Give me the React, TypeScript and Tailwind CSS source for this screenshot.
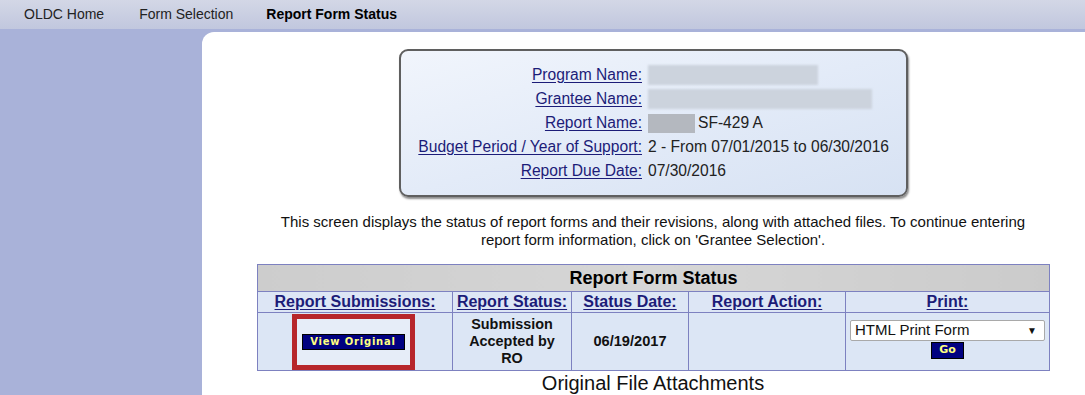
import React from "react";

const arial = { fontFamily: '"Liberation Sans", Arial, sans-serif' };

function Label({ children }: { children: React.ReactNode }) {
  return (
    <div className="text-right text-[15.6px] leading-[24px] text-[#1c1c78] underline underline-offset-2 whitespace-nowrap">
      {children}
    </div>
  );
}

export default function App() {
  return (
    <div
      className="w-[1085px] h-[395px] overflow-hidden bg-[#a9b2d9] text-[#111]"
      style={arial}
    >
      {/* Nav bar */}
      <div className="h-[29px] flex items-center text-[14px] bg-gradient-to-b from-[#d3d7e6] to-[#c1c7de] text-[#222]">
        <span className="ml-[24px]">OLDC Home</span>
        <span className="ml-[35px]">Form Selection</span>
        <span className="ml-[33px] font-bold text-black">Report Form Status</span>
      </div>

      <div className="flex">
        <div className="w-[202px] shrink-0" />
        <div className="flex-1 h-[366px] mt-[3px] bg-white rounded-tl-[12px]">
          <div className="ml-[55px] w-[792px] flex flex-col">
            {/* Info box */}
            <div className="mt-[17px] ml-[142px] w-[509px] h-[148px] rounded-[9px] border-2 border-[#5f5f5f] shadow-[1px_2px_2px_rgba(0,0,0,0.45)] bg-gradient-to-br from-[#f1f5fc] via-[#e3ebf8] to-[#d7e2f3] pt-[12px]">
              <div className="grid grid-cols-[241px_1fr] gap-x-[6px]">
                <Label>Program Name:</Label>
                <div className="flex items-center h-[24px]">
                  <div className="w-[170px] h-[20px] bg-[#ccd3dd] blur-[1px]" />
                </div>
                <Label>Grantee Name:</Label>
                <div className="flex items-center h-[24px]">
                  <div className="w-[224px] h-[20px] bg-[#ccd3dd] blur-[1px]" />
                </div>
                <Label>Report Name:</Label>
                <div className="flex items-center h-[24px] text-[15.6px] text-[#222]">
                  <div className="w-[47px] h-[19px] bg-[#b4b8bf] blur-[0.5px]" />
                  <span className="ml-[3px]">SF-429 A</span>
                </div>
                <Label>Budget Period / Year of Support:</Label>
                <div className="text-[15.6px] leading-[24px] text-[#222] whitespace-nowrap">
                  2 - From 07/01/2015 to 06/30/2016
                </div>
                <Label>Report Due Date:</Label>
                <div className="text-[15.6px] leading-[24px] text-[#222]">07/30/2016</div>
              </div>
            </div>

            {/* Description */}
            <p className="mt-[16px] mx-auto w-[780px] text-center text-[15px] leading-[18px] text-[#111]">
              This screen displays the status of report forms and their revisions, along with attached files. To continue entering report form information, click on 'Grantee Selection'.
            </p>

            {/* Table */}
            <table className="mt-[15px] w-[793px] border-collapse border border-[#7d81c0] text-[14px]">
              <thead>
                <tr>
                  <th
                    colSpan={5}
                    className="h-[27px] border border-[#7d81c0] bg-gradient-to-r from-[#cdcdcd] via-[#d6d6d6] to-[#cbcbcb] text-[18px] leading-[20px] font-bold text-black"
                  >
                    Report Form Status
                  </th>
                </tr>
                <tr className="bg-[#dde6f5]">
                  {[
                    ["Report Submissions:", "w-[195px]"],
                    ["Report Status:", "w-[119px]"],
                    ["Status Date:", "w-[117px]"],
                    ["Report Action:", "w-[157px]"],
                    ["Print:", ""],
                  ].map(([t, w]) => (
                    <th
                      key={t}
                      className={`${w} h-[21px] border border-[#7d81c0] font-bold text-[16px] text-[#1c1c78] underline underline-offset-2 leading-[18px] whitespace-nowrap`}
                    >
                      {t}
                    </th>
                  ))}
                </tr>
              </thead>
              <tbody>
                <tr className="bg-[#dce6f5] h-[58px]">
                  <td className="border border-[#7d81c0] align-middle">
                    <div className="flex justify-center">
                      <div className="ml-[-4px] w-[123px] h-[56px] border-[5px] border-[#b7262b] flex items-center justify-center bg-[#e6edf8]">
                        <div
                          className="w-[103px] h-[16px] bg-[#000080] border border-black flex items-center justify-center text-[10px] font-bold text-[#ffff80] tracking-[0.8px]"
                          style={{ fontFamily: '"DejaVu Sans", Verdana, sans-serif' }}
                        >
                          View Original
                        </div>
                      </div>
                    </div>
                  </td>
                  <td className="border border-[#7d81c0] text-center font-bold text-[14.4px] leading-[17px] text-[#111]">
                    Submission
                    <br />
                    Accepted by
                    <br />
                    RO
                  </td>
                  <td className="border border-[#7d81c0] text-center font-bold text-[14.6px] text-[#111]">
                    06/19/2017
                  </td>
                  <td className="border border-[#7d81c0]" />
                  <td className="border border-[#7d81c0] align-top">
                    <div className="flex flex-col items-center pt-[7px]">
                      <div className="w-[195px] h-[21px] bg-white border border-[#a9a9a9] rounded-[2px] flex items-center justify-between pl-[4px] pr-[7px] text-[15px] text-[#111]">
                        <span>HTML Print Form</span>
                        <span className="text-[10px]">▼</span>
                      </div>
                      <div
                        className="mt-[1px] w-[33px] h-[17px] bg-[#000080] border border-black flex items-center justify-center text-[11px] font-bold text-[#ffff80]"
                        style={{ fontFamily: '"DejaVu Sans", Verdana, sans-serif' }}
                      >
                        Go
                      </div>
                    </div>
                  </td>
                </tr>
              </tbody>
            </table>

            <div className="text-center text-[20px] leading-[22px] text-[#111] mt-[1px]">
              Original File Attachments
            </div>
          </div>
        </div>
      </div>
    </div>
  );
}
